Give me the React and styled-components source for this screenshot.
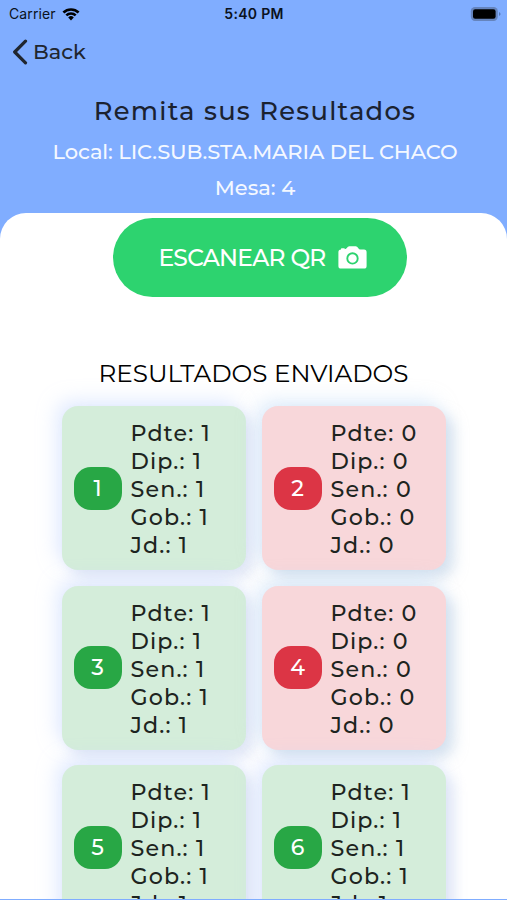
import React from 'react';
import styled, { createGlobalStyle } from 'styled-components';

const GlobalStyle = createGlobalStyle`
*{
box-sizing:border-box;
}
body{
margin:0;
background:#80adff;
font-family:Montserrat, Inter, "Liberation Sans", sans-serif;
}
`;

const Screen = styled.div`
display:flex;
flex-direction:column;
width:100%;
height:900px;
padding-bottom:1px;
overflow:hidden;
background:#80adff;
`;

const StatusBar = styled.div`
display:grid;
grid-template-columns:1fr auto 1fr;
align-items:center;
height:27px;
padding:0 6px 0 9px;
color:#0b1220;
font-family:Inter, sans-serif;
font-size:14px;
`;

const Carrier = styled.div`
display:flex;
align-items:center;
gap:6px;
letter-spacing:0.1px;
`;

const Time = styled.div`
font-weight:600;
letter-spacing:0.3px;
margin-right:2px;
`;

const BatteryCont = styled.div`
display:flex;
justify-content:flex-end;
`;

const BackButton = styled.button`
display:flex;
align-items:center;
gap:5px;
height:49px;
padding:0 0 0 12px;
border:none;
background:none;
color:#20262f;
font-family:inherit;
font-size:20.8px;
font-weight:500;
cursor:pointer;
`;

const Heading = styled.div`
display:flex;
flex-direction:column;
align-items:center;
height:137px;
padding-top:17px;
`;

const Title = styled.h1`
margin:0 0 6px;
color:#1b2230;
font-size:25.8px;
font-weight:500;
line-height:35px;
letter-spacing:1.25px;
padding-left:3px;
`;

const Subtitle = styled.p`
margin:0;
padding-left:3px;
color:#f4f8ff;
font-size:21px;
font-weight:500;
line-height:36px;
letter-spacing:${props=>props.spacing};
white-space:nowrap;
`;

const Panel = styled.div`
display:flex;
flex-direction:column;
align-items:center;
flex:1;
min-height:0;
padding-top:5px;
overflow:hidden;
border-radius:26px 26px 0 0;
background:white;
`;

const ScanButton = styled.button`
display:flex;
align-items:center;
justify-content:center;
gap:12px;
flex-shrink:0;
width:294px;
height:79px;
margin-left:13px;
padding:0 0 0 5px;
border:none;
border-radius:40px;
background:#2dd36f;
color:white;
font-family:inherit;
font-size:23.4px;
font-weight:500;
letter-spacing:-0.75px;
cursor:pointer;
`;

const SectionTitle = styled.h2`
flex-shrink:0;
margin:59px 0 16px;
color:#000;
font-size:24.7px;
font-weight:400;
line-height:34px;
white-space:nowrap;
`;

const CardGrid = styled.div`
display:grid;
grid-template-columns:184px 184px;
grid-auto-rows:164px;
gap:15.7px 16px;
`;

const Card = styled.div`
display:flex;
align-items:center;
gap:9px;
padding-left:12px;
border-radius:16px;
background:${props=>props.ok ? "#d4edda" : "#f8d7da"};
box-shadow:
8px 8px 14px ${props=>props.ok ? "rgba(190,205,235,0.45)" : "rgba(175,200,225,0.5)"},
-6px -6px 18px ${props=>props.ok ? "rgba(200,218,255,0.5)" : "rgba(195,222,250,0.5)"};
`;

const Badge = styled.div`
display:flex;
align-items:center;
justify-content:center;
width:48px;
height:43px;
border-radius:17px;
background:${props=>props.ok ? "#28a745" : "#dc3545"};
color:white;
font-size:22px;
font-weight:500;
`;

const Votes = styled.div`
display:flex;
flex-direction:column;
padding-top:4px;
color:#1d2420;
font-size:22.2px;
font-weight:500;
line-height:28px;
letter-spacing:1.15px;
white-space:nowrap;
`;

const WifiIcon = () => (
<svg width="18" height="14" viewBox="0 0 18 14">
    <path d="M0.5 4.6 A12.3 12.3 0 0 1 17.5 4.6 L15.7 6.4 A9.7 9.7 0 0 0 2.3 6.4 Z" />
    <path d="M3.4 7.5 A8 8 0 0 1 14.6 7.5 L12.8 9.3 A5.4 5.4 0 0 0 5.2 9.3 Z" />
    <path d="M6.2 10.4 A4 4 0 0 1 11.8 10.4 L9 13.4 Z" />
</svg>
);

const BatteryIcon = () => (
<svg width="31" height="16" viewBox="0 0 31 16">
    <rect x="0.8" y="1" width="27" height="14" rx="4.2" fill="#6584bd" />
    <rect x="3" y="3.2" width="22.6" height="9.6" rx="2.2" fill="#000" />
    <path d="M29 6 Q30.6 6.8 30.6 8 Q30.6 9.2 29 10 Z" fill="#567ab9" />
</svg>
);

const ChevronIcon = () => (
<svg width="16" height="26" viewBox="0 0 16 26">
    <path d="M13.5 2.2 L2.7 13 L13.5 23.8" fill="none" stroke="#20262f" strokeWidth="3.2" strokeLinecap="round" strokeLinejoin="round" />
</svg>
);

const CameraIcon = () => (
<svg width="29" height="23" viewBox="0 0 29 23">
    <path d="M3 3.6 V2.9 Q3 2.3 3.6 2.3 H6.2 Q6.8 2.3 6.8 2.9 V3.3 Q8.2 3.1 9 1.7 Q9.8 0.2 11.3 0.2 H17.7 Q19.2 0.2 20 1.7 Q21 3.6 22.6 3.6 H26 Q28.6 3.6 28.6 6.2 V20 Q28.6 22.6 26 22.6 H3 Q0.4 22.6 0.4 20 V6.2 Q0.4 3.7 3 3.6 Z" fill="#fff" />
    <circle cx="14.5" cy="12.4" r="5.2" fill="none" stroke="#2dd36f" strokeWidth="1.9" />
</svg>
);

const results = [
    {id:1, votes:1},
    {id:2, votes:0},
    {id:3, votes:1},
    {id:4, votes:0},
    {id:5, votes:1},
    {id:6, votes:1},
];

const labels = ["Pdte:", "Dip.:", "Sen.:", "Gob.:", "Jd.:"];

const ResultCard = ({id, votes}) => {
 const ok = votes > 0 ? 1 : 0;
 return <Card ok={ok}>
    <Badge ok={ok}>{id}</Badge>
    <Votes>
        {labels.map(o=><span key={o}>{o} {votes}</span>)}
    </Votes>
 </Card>
}

const App = () => {
 return <Screen>
    <GlobalStyle />
    <StatusBar>
        <Carrier>Carrier <WifiIcon /></Carrier>
        <Time>5:40 PM</Time>
        <BatteryCont><BatteryIcon /></BatteryCont>
    </StatusBar>
    <BackButton><ChevronIcon />Back</BackButton>
    <Heading>
        <Title>Remita sus Resultados</Title>
        <Subtitle spacing="-0.1px">Local: LIC.SUB.STA.MARIA DEL CHACO</Subtitle>
        <Subtitle spacing="0px">Mesa: 4</Subtitle>
    </Heading>
    <Panel>
        <ScanButton>ESCANEAR QR <CameraIcon /></ScanButton>
        <SectionTitle>RESULTADOS ENVIADOS</SectionTitle>
        <CardGrid>
            {results.map(o=><ResultCard key={o.id} id={o.id} votes={o.votes} />)}
        </CardGrid>
    </Panel>
 </Screen>
}

export default App;
